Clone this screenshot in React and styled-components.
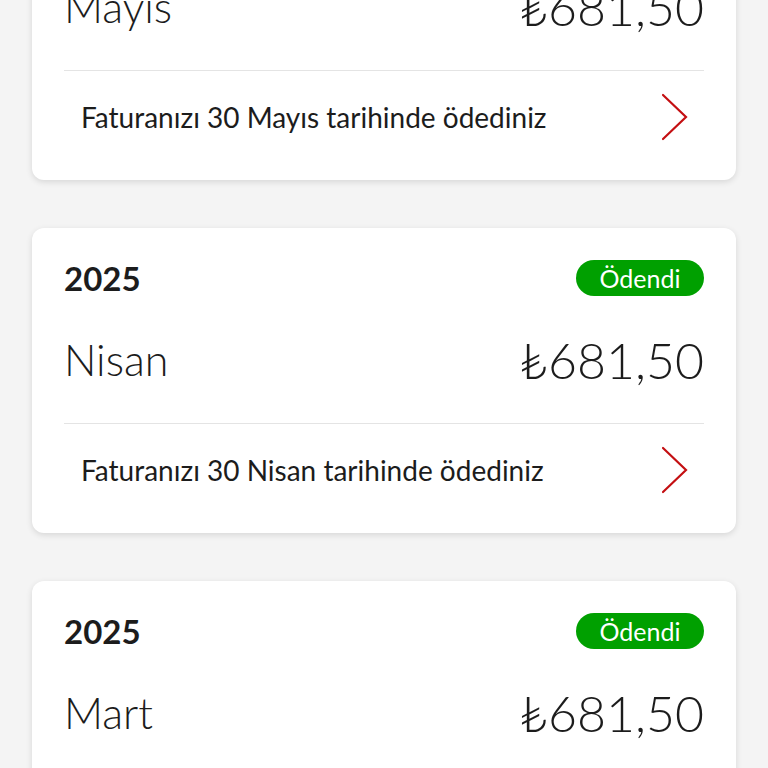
import React from 'react';
import styled, { createGlobalStyle } from 'styled-components';

const GlobalStyle = createGlobalStyle`
    html, body {
        margin: 0;
        padding: 0;
        background: #f4f4f4;
        font-family: Lato, "Open Sans", "Liberation Sans", sans-serif;
        color: #1c1c1c;
        overflow: hidden;
    }
`;

const BillList = styled.div`
    display: flex;
    flex-direction: column;
    gap: 48px;
    padding: 0 32px;
    margin-top: -125px;
`;

const Card = styled.div`
    background: #fff;
    border-radius: 12px;
    box-shadow: 0 2px 6px rgba(0, 0, 0, 0.12);
    padding: 32px 32px 17px;
`;

const TopRow = styled.div`
    display: flex;
    justify-content: space-between;
    align-items: center;
    height: 36px;
`;

const Year = styled.span`
    font-size: 33px;
    font-weight: 700;
`;

const Badge = styled.span`
    display: inline-flex;
    align-items: center;
    justify-content: center;
    height: 36px;
    width: 128px;
    border-radius: 18px;
    background: #00a000;
    color: #fff;
    font-size: 25px;
`;

const AmountRow = styled.div`
    display: flex;
    justify-content: space-between;
    align-items: center;
    height: 127px;
    border-bottom: 1px solid #e4e4e4;
`;

const Month = styled.span`
    font-size: 43px;
    font-weight: 300;
`;

const Amount = styled.span`
    font-size: 50px;
    font-weight: 300;
`;

const FooterRow = styled.div`
    display: flex;
    justify-content: space-between;
    align-items: center;
    height: 92px;
    padding-left: 17px;
    padding-right: 16px;
`;

const FooterText = styled.span`
    font-size: 28px;
`;

const Chevron = () => (
    <svg width="28" height="48" viewBox="0 0 28 48" fill="none">
        <path d="M3 2 L26 24 L3 46" stroke="#c40f12" strokeWidth="2.2" strokeLinecap="round" strokeLinejoin="miter" />
    </svg>
);

const bills = [
    { year: 2025, month: 'Mayıs', amount: '₺681,50', paidOn: '30 Mayıs' },
    { year: 2025, month: 'Nisan', amount: '₺681,50', paidOn: '30 Nisan' },
    { year: 2025, month: 'Mart', amount: '₺681,50', paidOn: '30 Mart' },
];

const App = () => {
    return (
        <>
            <GlobalStyle />
            <BillList>
                {bills.map((bill) => (
                    <Card key={bill.month}>
                        <TopRow>
                            <Year>{bill.year}</Year>
                            <Badge>Ödendi</Badge>
                        </TopRow>
                        <AmountRow>
                            <Month>{bill.month}</Month>
                            <Amount>{bill.amount}</Amount>
                        </AmountRow>
                        <FooterRow>
                            <FooterText>Faturanızı {bill.paidOn} tarihinde ödediniz</FooterText>
                            <Chevron />
                        </FooterRow>
                    </Card>
                ))}
            </BillList>
        </>
    );
};

export default App;
